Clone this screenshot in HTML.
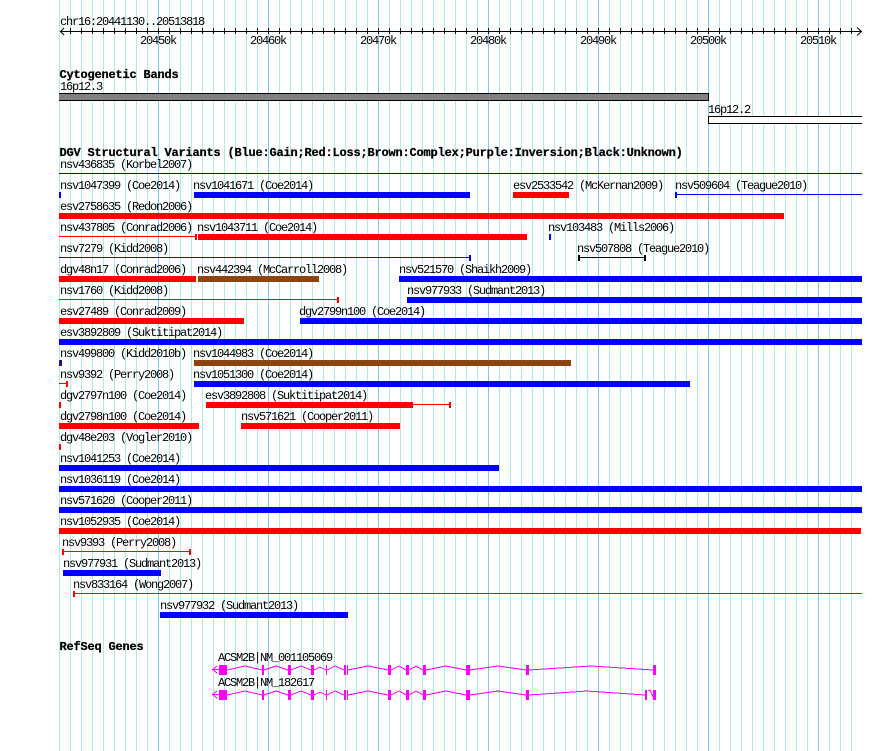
<!DOCTYPE html>
<html>
<head>
<meta charset="utf-8">
<title>GBrowse</title>
<style>
html,body{margin:0;padding:0;background:#fff;width:890px;height:751px;overflow:hidden}
#g{position:absolute;left:59px;top:0;width:793px;height:751px;
background-image:linear-gradient(to right,#7cc8f0 1px,transparent 1px),linear-gradient(to right,#b0e8ee 1px,transparent 1px);
background-size:110px 100%,11px 100%;background-position:99px 0,0 0;background-repeat:repeat-x,repeat-x}
svg{position:absolute;left:0;top:0}
text{font-family:"Liberation Mono",monospace;font-size:12px;letter-spacing:-1.2px;fill:#000;white-space:pre}
text.b{font-weight:bold;font-size:12px;letter-spacing:-.2px;stroke:#000;stroke-width:.25px}
.u{fill:#00f}.r{fill:#f00}.w{fill:#8b4513}.p{fill:#2e0f80}
rect{shape-rendering:crispEdges}
.c{shape-rendering:crispEdges}
</style>
</head>
<body>
<div id="g"></div>
<svg width="890" height="751" viewBox="0 0 890 751">
<!-- ruler -->
<text x="60" y="25">chr16:20441130..20513818</text>
<rect x="60" y="31" width="802" height="1" fill="#000"/>
<line x1="70" y1="31" x2="862" y2="31" stroke="#000" stroke-width="6" stroke-dasharray="1 10" style="shape-rendering:crispEdges"/>
<path d="M64 28L60.500 31.500L64 35M857 27.500L861.500 31.500L857 35.500" fill="none" stroke="#000"/>
<text x="140" y="44">20450k</text><text x="250" y="44">20460k</text><text x="360" y="44">20470k</text><text x="470" y="44">20480k</text><text x="580" y="44">20490k</text><text x="690" y="44">20500k</text><text x="800" y="44">20510k</text>

<!-- cytogenetic -->
<text class="b" x="59.500" y="78">Cytogenetic Bands</text>
<text x="60" y="90">16p12.3</text>
<rect x="59" y="93" width="650" height="8" fill="#000"/><rect x="59" y="94" width="649" height="6" fill="#808080"/>
<text x="708" y="113">16p12.2</text>
<rect x="708" y="116" width="154" height="8" fill="#000"/><rect x="709" y="117" width="153" height="6" fill="#fff"/>

<!-- DGV -->
<text class="b" x="59.500" y="156">DGV Structural Variants (Blue:Gain;Red:Loss;Brown:Complex;Purple:Inversion;Black:Unknown)</text>

<text x="60" y="168">nsv436835 (Korbel2007)</text>
<rect class="u" x="59" y="173" width="803" height="1"/>

<text x="60" y="189">nsv1047399 (Coe2014)</text><rect class="u" x="59" y="192" width="2" height="6"/>
<text x="193" y="189">nsv1041671 (Coe2014)</text><rect class="u" x="194" y="192" width="276" height="6"/>
<text x="513" y="189">esv2533542 (McKernan2009)</text><rect class="r" x="513" y="192" width="56" height="6"/>
<text x="675" y="189">nsv509604 (Teague2010)</text><rect class="u" x="675" y="194" width="187" height="1"/><rect class="u" x="675" y="192" width="2" height="6"/>

<text x="60" y="210">esv2758635 (Redon2006)</text><rect class="r" x="59" y="213" width="725" height="6"/>

<text x="60" y="231">nsv437805 (Conrad2006)</text><rect class="r" x="59" y="236" width="137" height="1"/><rect class="r" x="195" y="234" width="2" height="6"/>
<text x="197" y="231">nsv1043711 (Coe2014)</text><rect class="r" x="198" y="234" width="329" height="6"/>
<text x="548" y="231">nsv103483 (Mills2006)</text><rect class="u" x="549" y="234" width="2" height="6"/>

<text x="60" y="252">nsv7279 (Kidd2008)</text><rect class="p" x="59" y="257" width="411" height="1"/><rect class="u" x="469" y="255" width="2" height="6"/>
<text x="577" y="252">nsv507808 (Teague2010)</text><rect x="578" y="257" width="67" height="1" fill="#000"/><rect x="578" y="255" width="2" height="6" fill="#000"/><rect x="644" y="255" width="2" height="6" fill="#000"/>

<text x="60" y="273">dgv48n17 (Conrad2006)</text><rect class="r" x="59" y="276" width="137" height="6"/>
<text x="197" y="273">nsv442394 (McCarroll2008)</text><rect class="w" x="198" y="276" width="121" height="6"/>
<text x="399" y="273">nsv521570 (Shaikh2009)</text><rect class="u" x="399" y="276" width="463" height="6"/>

<text x="60" y="294">nsv1760 (Kidd2008)</text><rect class="r" x="59" y="299" width="279" height="1"/><rect class="r" x="337" y="297" width="2" height="6"/>
<text x="407" y="294">nsv977933 (Sudmant2013)</text><rect class="u" x="407" y="297" width="455" height="6"/>

<text x="60" y="315">esv27489 (Conrad2009)</text><rect class="r" x="59" y="318" width="185" height="6"/>
<text x="299" y="315">dgv2799n100 (Coe2014)</text><rect class="u" x="300" y="318" width="562" height="6"/>

<text x="60" y="336">esv3892809 (Suktitipat2014)</text><rect class="u" x="59" y="339" width="803" height="6"/>

<text x="60" y="357">nsv499800 (Kidd2010b)</text><rect class="p" x="59" y="360" width="3" height="6"/>
<text x="193" y="357">nsv1044983 (Coe2014)</text><rect class="w" x="194" y="360" width="377" height="6"/>

<text x="60" y="378">nsv9392 (Perry2008)</text><rect class="r" x="59" y="383" width="8" height="1"/><rect class="r" x="66" y="381" width="2" height="6"/>
<text x="193" y="378">nsv1051300 (Coe2014)</text><rect class="u" x="194" y="381" width="496" height="6"/>

<text x="60" y="399">dgv2797n100 (Coe2014)</text><rect class="r" x="59" y="402" width="2" height="6"/>
<text x="205" y="399">esv3892808 (Suktitipat2014)</text><rect class="r" x="206" y="402" width="207" height="6"/><rect class="r" x="413" y="404" width="37" height="1"/><rect class="r" x="449" y="402" width="2" height="6"/>

<text x="60" y="420">dgv2798n100 (Coe2014)</text><rect class="r" x="59" y="423" width="140" height="6"/>
<text x="241" y="420">nsv571621 (Cooper2011)</text><rect class="r" x="241" y="423" width="159" height="6"/>

<text x="60" y="441">dgv48e203 (Vogler2010)</text><rect class="r" x="59" y="444" width="2" height="6"/>

<text x="60" y="462">nsv1041253 (Coe2014)</text><rect class="u" x="59" y="465" width="440" height="6"/>
<text x="60" y="483">nsv1036119 (Coe2014)</text><rect class="u" x="59" y="486" width="803" height="6"/>
<text x="60" y="504">nsv571620 (Cooper2011)</text><rect class="u" x="59" y="507" width="803" height="6"/>
<text x="60" y="525">nsv1052935 (Coe2014)</text><rect class="r" x="59" y="528" width="802" height="6"/>

<text x="62" y="546">nsv9393 (Perry2008)</text><rect class="r" x="62" y="551" width="129" height="1"/><rect class="r" x="62" y="549" width="2" height="6"/><rect class="r" x="189" y="549" width="2" height="6"/>
<text x="63" y="567">nsv977931 (Sudmant2013)</text><rect class="u" x="63" y="570" width="98" height="6"/>
<text x="73" y="588">nsv833164 (Wong2007)</text><rect x="73" y="593" width="789" height="1" fill="#e01010"/><rect class="r" x="73" y="591" width="2" height="6"/>
<text x="160" y="609">nsv977932 (Sudmant2013)</text><rect class="u" x="160" y="612" width="188" height="6"/>

<!-- RefSeq -->
<text class="b" x="59.500" y="650">RefSeq Genes</text>
<text x="218" y="661">ACSM2B|NM_001105069</text>
<text x="218" y="686">ACSM2B|NM_182617</text>
<g fill="none" stroke="#f0f" stroke-width="1" class="c">
<path d="M217 666L212.500 669.500L217 673M212 669.500H219M227 670L245 666L262 670M264 670L276 666L288 670M291 670L301 666L311 670M314 670L320 667L326 670M327 670L335 666L344 670M348 670L368 666L388 670M391 670L399 666L406 670M409 670L416 666L423 670M426 670L446 666L466 670M470 670L498 666L526 670M529 670L591 666L653 670"/>
<path d="M217 691L212.500 694.500L217 698M212 694.500H219M227 695L245 691L262 695M264 695L276 691L288 695M291 695L301 691L311 695M314 695L320 692L326 695M327 695L335 691L344 695M348 695L368 691L388 695M391 695L399 691L406 695M409 695L416 691L423 695M426 695L446 691L466 695M470 695L498 691L526 695M529 695L587 691L645 695M648 691L650 690L653 697"/>
</g>
<g fill="#f0f">
<rect x="219" y="665" width="8" height="10"/><rect x="262" y="665" width="2" height="10"/><rect x="288" y="665" width="3" height="10"/><rect x="311" y="665" width="3" height="10"/><rect x="326" y="665" width="1" height="10"/><rect x="344" y="665" width="2" height="10"/><rect x="347" y="665" width="1" height="10"/><rect x="388" y="665" width="3" height="10"/><rect x="406" y="665" width="3" height="10"/><rect x="423" y="665" width="3" height="10"/><rect x="466" y="665" width="4" height="10"/><rect x="526" y="665" width="3" height="10"/><rect x="653" y="665" width="3" height="10"/>
<rect x="219" y="690" width="8" height="10"/><rect x="262" y="690" width="2" height="10"/><rect x="288" y="690" width="3" height="10"/><rect x="311" y="690" width="3" height="10"/><rect x="326" y="690" width="1" height="10"/><rect x="344" y="690" width="2" height="10"/><rect x="347" y="690" width="1" height="10"/><rect x="388" y="690" width="3" height="10"/><rect x="406" y="690" width="3" height="10"/><rect x="423" y="690" width="3" height="10"/><rect x="466" y="690" width="4" height="10"/><rect x="526" y="690" width="3" height="10"/><rect x="645" y="690" width="2" height="10"/><rect x="653" y="690" width="3" height="10"/>
</g>
</svg>
</body>
</html>
